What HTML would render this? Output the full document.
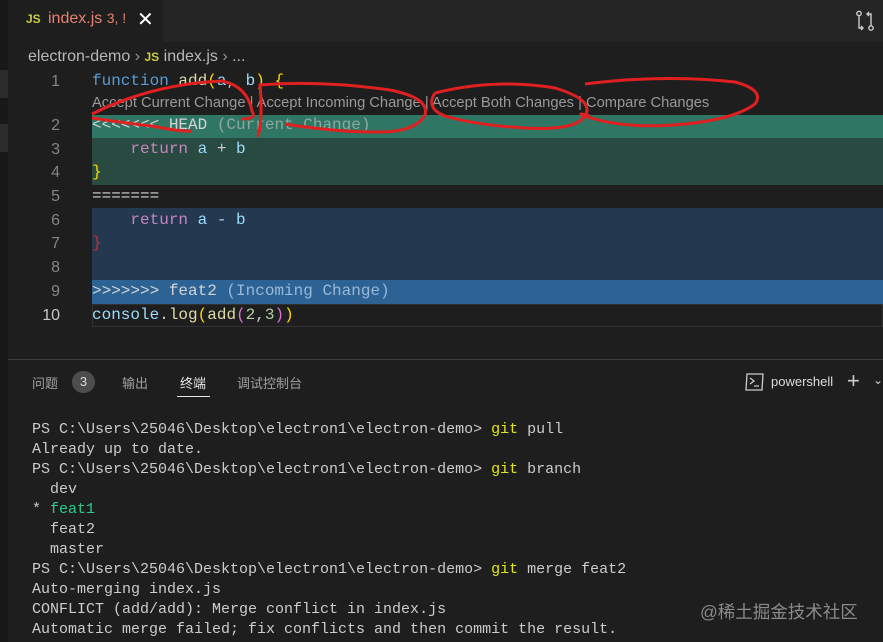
<!DOCTYPE html>
<html><head><meta charset="utf-8"><style>
*{margin:0;padding:0;box-sizing:border-box}
body{width:883px;height:642px;background:#1e1e1e;overflow:hidden;position:relative;font-family:"Liberation Sans","Noto Sans CJK SC",sans-serif;color:#ccc}
.abs{position:absolute}
.mono{font-family:"Liberation Mono","Noto Sans CJK SC",monospace}
.code{font-size:16px;white-space:pre;left:92px;line-height:23px}
.ln{font-size:16px;color:#858585;width:60px;text-align:right;left:0;line-height:23px}
.term{left:32px;font-size:15px;line-height:20px;white-space:pre;color:#cccccc;top:420px}
.y{color:#e5e510}
</style></head><body>
<div class="abs" style="left:0;top:0;width:883px;height:42px;background:#252526"></div>
<div class="abs" style="left:8px;top:0;width:155px;height:42px;background:#1e1e1e"></div>
<div class="abs" style="left:0;top:0;width:8px;height:642px;background:#181818"></div>
<div class="abs" style="left:0;top:70px;width:8px;height:28px;background:#2c2c2e"></div>
<div class="abs" style="left:0;top:124px;width:8px;height:28px;background:#2c2c2e"></div>
<div class="abs" style="left:26px;top:12px;font-size:12px;font-weight:bold;color:#cbcb41">JS</div>
<div class="abs" style="left:48px;top:10px;font-size:16px;color:#e8826f">index.js <span style="font-size:14px">3, !</span></div>
<div class="abs" style="left:137px;top:7px;font-size:20px;color:#fff">✕</div>
<svg class="abs" style="left:855px;top:10px" width="20" height="22" viewBox="0 0 20 22" fill="none" stroke="#ccc" stroke-width="1.4"><circle cx="4" cy="3.5" r="2.2"/><circle cx="16" cy="18" r="2.2"/><path d="M4 6v12h4M6 16l2 2-2 2M16 15.5V4h-4M14 2l-2 2 2 2"/></svg>
<div class="abs" style="left:28px;top:48px;font-size:16px;color:#b8b8b8">electron-demo <span style="color:#999">›</span> <span style="font-size:12px;font-weight:bold;color:#cbcb41">JS</span> index.js <span style="color:#999">›</span> ...</div>
<div class="abs" style="left:92px;top:115px;width:791px;height:23px;background:#2f7665"></div>
<div class="abs" style="left:92px;top:138px;width:791px;height:47px;background:#284a40"></div>
<div class="abs" style="left:92px;top:208px;width:791px;height:72px;background:#243850"></div>
<div class="abs" style="left:92px;top:280px;width:791px;height:24px;background:#2d6294"></div>
<div class="abs" style="left:92px;top:304px;width:791px;height:23px;border:1px solid #303030"></div>
<div class="abs ln" style="top:70px">1</div>
<div class="abs ln" style="top:114px">2</div>
<div class="abs ln" style="top:138px">3</div>
<div class="abs ln" style="top:161px">4</div>
<div class="abs ln" style="top:185px">5</div>
<div class="abs ln" style="top:209px">6</div>
<div class="abs ln" style="top:232px">7</div>
<div class="abs ln" style="top:256px">8</div>
<div class="abs ln" style="top:280px">9</div>
<div class="abs ln" style="top:304px;color:#c6c6c6">10</div>
<div class="abs mono code" style="top:70px"><span style="color:#569cd6">function</span> <span style="color:#dcdcaa">add</span><span style="color:#ffd700">(</span><span style="color:#9cdcfe">a</span>, <span style="color:#9cdcfe">b</span><span style="color:#ffd700">)</span> <span style="color:#ffd700">{</span></div>
<div class="abs" style="left:92px;top:95px;font-size:14.7px;color:#999;white-space:pre">Accept Current Change | Accept Incoming Change | Accept Both Changes | Compare Changes</div>
<div class="abs mono code" style="top:114px;color:#d4d4d4">&lt;&lt;&lt;&lt;&lt;&lt;&lt; HEAD <span style="color:#8fa8a0">(Current Change)</span></div>
<div class="abs mono code" style="top:138px">    <span style="color:#c586c0">return</span> <span style="color:#9cdcfe">a</span> + <span style="color:#9cdcfe">b</span></div>
<div class="abs mono code" style="top:161px;color:#ffd700">}</div>
<div class="abs mono code" style="top:185px;color:#d4d4d4">=======</div>
<div class="abs mono code" style="top:209px">    <span style="color:#c586c0">return</span> <span style="color:#9cdcfe">a</span> - <span style="color:#9cdcfe">b</span></div>
<div class="abs mono code" style="top:232px;color:#c03030">}</div>
<div class="abs mono code" style="top:280px;color:#d4d4d4">&gt;&gt;&gt;&gt;&gt;&gt;&gt; feat2 <span style="color:#9ab8d6">(Incoming Change)</span></div>
<div class="abs mono code" style="top:304px"><span style="color:#9cdcfe">console</span>.<span style="color:#dcdcaa">log</span><span style="color:#ffd700">(</span><span style="color:#dcdcaa">add</span><span style="color:#da70d6">(</span><span style="color:#b5cea8">2</span>,<span style="color:#b5cea8">3</span><span style="color:#da70d6">)</span><span style="color:#ffd700">)</span></div>
<svg class="abs" style="left:0;top:0" width="883" height="360" fill="none" stroke="#e02020" stroke-width="3">
<path d="M92 114 q60 -30 130 -33 q25 5 30 30 q5 8 -10 8 M92 118 q40 6 60 8 q30 6 40 5"/>
<path d="M258 137 q5 -20 2 -52 q60 -5 130 5 q40 8 35 25 q-10 18 -50 17 q-40 0 -90 -8"/>
<path d="M435 93 q60 -15 120 -5 q40 12 30 28 q-10 15 -60 12 q-50 -3 -80 -12 q-20 -8 -10 -23"/>
<path d="M585 84 q80 -10 150 -2 q30 8 20 22 q-20 15 -70 20 q-60 6 -100 -8 q-10 -4 5 0"/>
</svg>
<div class="abs" style="left:8px;top:359px;width:875px;height:1px;background:#3c3c3c"></div>
<div class="abs" style="left:32px;top:373px;font-size:13px;color:#a0a0a0">问题</div>
<div class="abs" style="left:72px;top:371px;width:23px;height:22px;border-radius:11px;background:#4d4d4d;color:#ddd;font-size:13px;text-align:center;line-height:22px">3</div>
<div class="abs" style="left:122px;top:373px;font-size:13px;color:#a0a0a0">输出</div>
<div class="abs" style="left:180px;top:373px;font-size:13px;color:#e7e7e7">终端</div>
<div class="abs" style="left:177px;top:396px;width:33px;height:1px;background:#e7e7e7"></div>
<div class="abs" style="left:237px;top:373px;font-size:13px;color:#a0a0a0">调试控制台</div>
<svg class="abs" style="left:745px;top:373px" width="20" height="18" viewBox="0 0 20 18" fill="none" stroke="#ccc" stroke-width="1.3"><path d="M2 1h16l-1 16H1z"/><path d="M5 5l4 3-4 3M9 13h5"/></svg>
<div class="abs" style="left:771px;top:374px;font-size:13px;color:#ddd">powershell</div>
<div class="abs" style="left:847px;top:368px;font-size:22px;color:#ccc;font-weight:300">+</div>
<div class="abs" style="left:873px;top:373px;font-size:12px;color:#ccc">⌄</div>
<div class="abs mono term">PS C:\Users\25046\Desktop\electron1\electron-demo&gt; <span class="y">git</span> pull
Already up to date.
PS C:\Users\25046\Desktop\electron1\electron-demo&gt; <span class="y">git</span> branch
  dev
* <span style="color:#23d18b">feat1</span>
  feat2
  master
PS C:\Users\25046\Desktop\electron1\electron-demo&gt; <span class="y">git</span> merge feat2
Auto-merging index.js
CONFLICT (add/add): Merge conflict in index.js
Automatic merge failed; fix conflicts and then commit the result.</div>
<div class="abs" style="left:700px;top:599px;font-size:17.5px;color:#8a8a8a">@稀土掘金技术社区</div>
</body></html>
